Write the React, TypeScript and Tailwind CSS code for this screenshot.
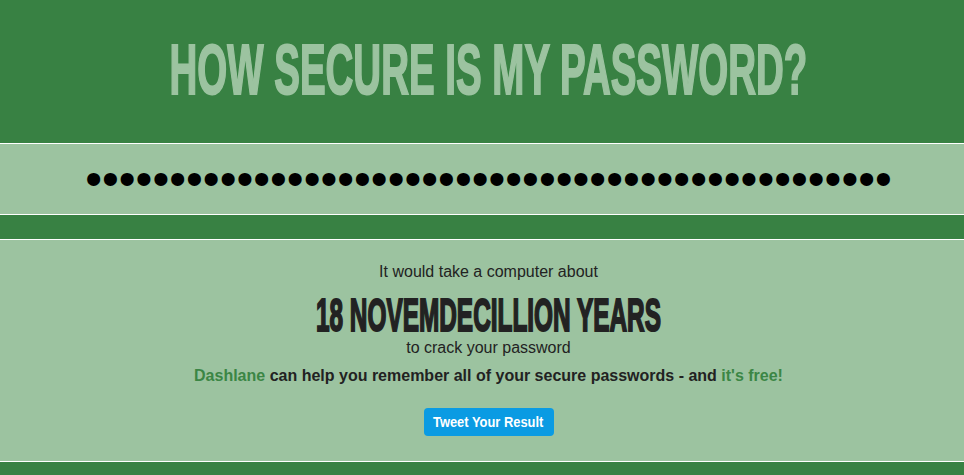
import React from 'react';

const PASSWORD = 'x'.repeat(48);

export default function App() {
  return (
    <div className="min-h-screen bg-[#388143] font-['Liberation_Sans',Arial,sans-serif]">
      {/* 标题 */}
      <header className="h-[144px] border-b border-white pt-[33px] pl-[13px] flex justify-center overflow-hidden">
        <h1 className="inline-block whitespace-nowrap text-[71px] leading-[74px] font-bold text-[#9cc3a0] [-webkit-text-stroke:2px_#9cc3a0] scale-x-[0.542] origin-center">
          HOW SECURE IS MY PASSWORD?
        </h1>
      </header>

      {/* 密码输入 */}
      <div className="h-[71px] bg-[#9cc3a0] border-b border-white pl-[13px] flex items-center">
        <input
          type="password"
          readOnly
          value={PASSWORD}
          className="w-full h-[54px] bg-transparent text-center text-[48px] text-black outline-none border-0 font-['Liberation_Sans',Arial,sans-serif]"
        />
      </div>

      <div className="h-[25px] border-b border-white" />

      {/* 结果 */}
      <section className="h-[222px] bg-[#9cc3a0] border-b border-white pt-[22px] pl-[13px] text-center text-[#222] overflow-hidden">
        <p className="text-[16px] leading-[20px]">It would take a computer about</p>
        <div className="mt-[11px] flex justify-center">
          <span className="inline-block whitespace-nowrap text-[46px] leading-[45px] font-bold text-[#222] [-webkit-text-stroke:2px_#222] scale-x-[0.53] origin-center">
            18 NOVEMDECILLION YEARS
          </span>
        </div>
        <p className="text-[16px] leading-[20px]">to crack your password</p>
        <p className="mt-[8px] text-[16px] leading-[20px] font-bold">
          <span className="text-[#3b8645]">Dashlane</span> can help you remember all of your secure passwords - and{' '}
          <span className="text-[#3b8645]">it's free!</span>
        </p>
        <button
          type="button"
          className="mt-[22px] w-[130px] h-[28px] rounded-[4px] bg-[#0a9be3] text-white leading-[28px] inline-flex justify-center"
        >
          <span className="inline-block whitespace-nowrap text-[15px] font-bold scale-x-[0.86] origin-center">
            Tweet Your Result
          </span>
        </button>
      </section>
    </div>
  );
}
